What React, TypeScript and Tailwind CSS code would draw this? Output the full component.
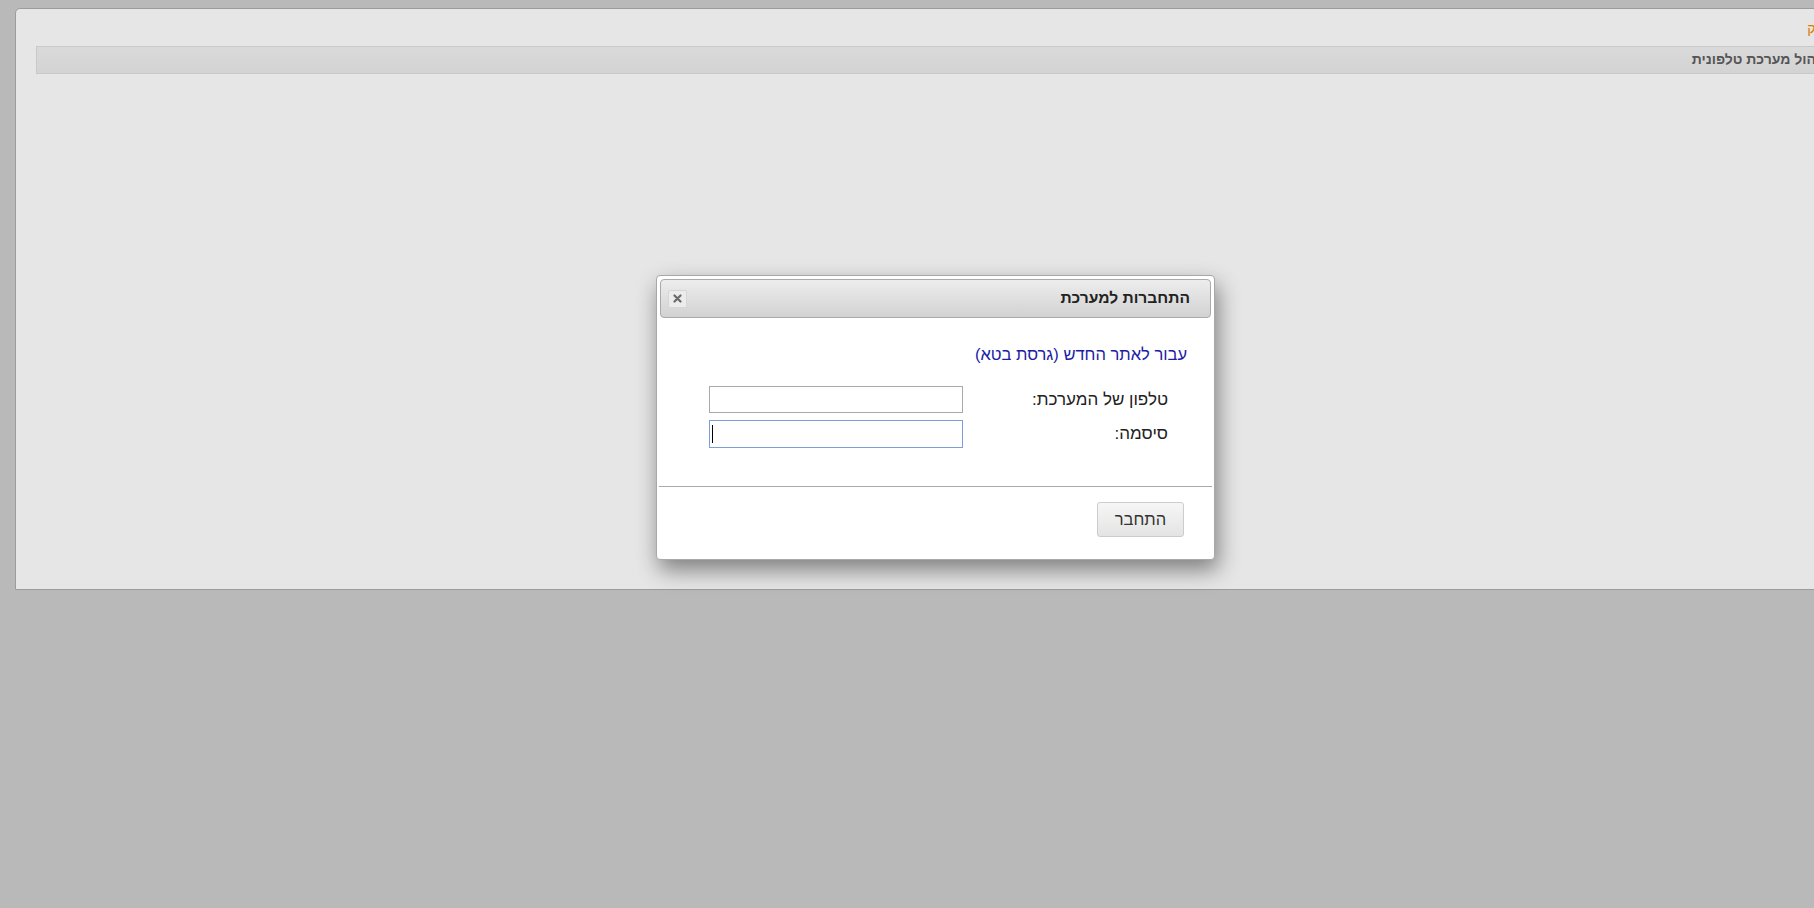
import React from "react";

const font = { fontFamily: '"Liberation Sans", Arial, sans-serif' };

export default function App() {
  return (
    <div
      className="relative w-[1814px] h-[908px] overflow-hidden bg-[#b9b9b9]"
      style={font}
    >
      {/* page container */}
      <div className="ml-[15px] pt-[8px]">
        <div className="w-[1840px] h-[582px] border border-[#9c9c9c] rounded-tl-[5px] bg-[#e6e6e6] flex flex-col">
          <div dir="rtl" className="h-[37px] flex items-start pt-[10px] pr-[5px]">
            <span className="text-[14px] leading-[18px] text-[#e07b00]">
              התנתק
            </span>
          </div>
          <div
            dir="rtl"
            className="ml-[20px] mr-[6px] h-[28px] border border-[#c9c9c9] bg-gradient-to-b from-[#dadada] to-[#d3d3d3] flex items-center pr-[21px]"
          >
            <span className="text-[14px] font-bold text-[#555555] -mt-[1px]">
              ניהול מערכת טלפונית
            </span>
          </div>
        </div>
      </div>

      {/* dialog */}
      <div
        dir="rtl"
        className="absolute left-[656px] top-[275px] w-[559px] h-[285px] bg-white border border-[#a8a8a8] rounded-[4px] p-[3px] shadow-[3px_10px_22px_rgba(0,0,0,0.45)] flex flex-col"
      >
        <div className="h-[39px] border border-[#aaaaaa] rounded-[4px] bg-gradient-to-b from-[#ededed] to-[#d2d2d2] flex items-center justify-between pr-[20px] pl-[7px]">
          <span className="text-[15.6px] font-bold text-[#222222] -mt-[2px]">
            התחברות למערכת
          </span>
          <div className="w-[19px] h-[18px] rounded-[2px] bg-[#ececec] border border-[#d6d6d6] flex items-center justify-center">
            <svg width="9" height="9" viewBox="0 0 9 9">
              <path
                d="M1.5 1.5 L7.5 7.5 M7.5 1.5 L1.5 7.5"
                stroke="#6a6a6a"
                strokeWidth="2.2"
                strokeLinecap="round"
              />
            </svg>
          </div>
        </div>

        <div className="flex-1 flex flex-col">
          <div className="pt-[25px] pr-[24px]">
            <a className="text-[16.5px] leading-[20px] text-[#1c1ca6] cursor-pointer">
              עבור לאתר החדש (גרסת בטא)
            </a>
          </div>

          <div className="mt-[19px] pr-[43px] flex flex-col gap-[7px]">
            <div className="flex items-center">
              <label className="w-[205px] text-[17px] text-[#222222]">
                טלפון של המערכת:
              </label>
              <input
                readOnly
                className="w-[254px] h-[27px] border border-[#a9a9a9] bg-white outline-none"
              />
            </div>
            <div className="flex items-center">
              <label className="w-[205px] text-[17px] text-[#222222]">
                סיסמה:
              </label>
              <div className="relative w-[254px] h-[28px] border border-[#7d9fd8] bg-white">
                <span className="absolute left-[2px] top-[4px] w-[1px] h-[18px] bg-black" />
              </div>
            </div>
          </div>

          <div className="mt-[38px] h-px bg-[#aaaaaa] -mx-[1px]" />

          <div className="pt-[15px] pr-[27px]">
            <button className="w-[87px] h-[35px] border border-[#cccccc] rounded-[3px] bg-gradient-to-b from-[#f6f6f6] to-[#e4e4e4] text-[16.5px] text-[#333333]">
              התחבר
            </button>
          </div>
        </div>
      </div>
    </div>
  );
}
